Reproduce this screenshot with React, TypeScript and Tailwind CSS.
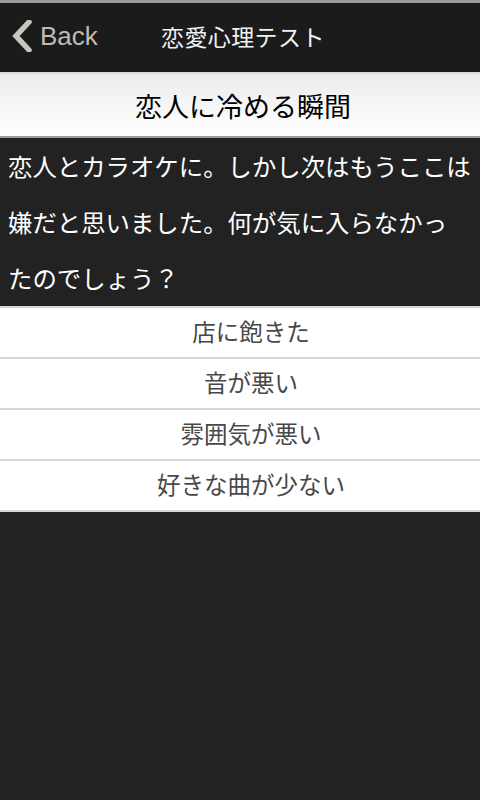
const choices = ["店に飽きた", "音が悪い", "雰囲気が悪い", "好きな曲が少ない"];

function BackChevron() {
  return (
    <svg width="24" height="32" viewBox="0 0 24 32" className="shrink-0">
      <path d="M19 2 L6 16 L19 30" fill="none" stroke="#c9c6c0" strokeWidth="5.5" strokeLinecap="round" strokeLinejoin="miter" />
    </svg>
  );
}

export default function App() {
  return (
    <div className="min-h-[800px] w-[480px] bg-[#222222] font-['Noto_Sans_CJK_JP','Noto_Sans',sans-serif]">
      {/* Header */}
      <header className="flex h-[74px] items-center border-t-[3px] border-b-2 border-t-[#9a9a9a] border-b-[#d8d8d8] bg-[#1b1b1b] pb-[3px]">
        <button className="flex w-[120px] items-center pl-[10px] text-[#c0bcb4]">
          <BackChevron />
          <span className="ml-[6px] font-['Liberation_Sans',sans-serif] text-[26px] leading-none">Back</span>
        </button>
        <h1 className="ml-[41px] text-[23px] leading-none tracking-[0.4px] text-[#f2f2f2]">恋愛心理テスト</h1>
      </header>

      {/* Title */}
      <div className="flex h-[64px] items-center justify-center border-b-2 border-[#9c9c9c] bg-gradient-to-b from-[#ececec] to-white">
        <h2 className="pl-[6px] text-[27px] leading-none text-black">恋人に冷める瞬間</h2>
      </div>

      {/* Question */}
      <p className="whitespace-nowrap pl-[8px] text-[24.4px] leading-[56px] text-white">
        恋人とカラオケに。しかし次はもうここは
        <br />
        嫌だと思いました。何が気に入らなかっ
        <br />
        たのでしょう？
      </p>

      {/* Choices */}
      <ul className="border-t-2 border-[#d6d6d6] bg-white">
        {choices.map((c) => (
          <li
            key={c}
            className="flex h-[51px] items-center justify-center border-b-2 border-[#d6d6d6] pb-[2px] pl-[22px] text-[23.5px] text-[#484848]"
          >
            {c}
          </li>
        ))}
      </ul>
    </div>
  );
}
